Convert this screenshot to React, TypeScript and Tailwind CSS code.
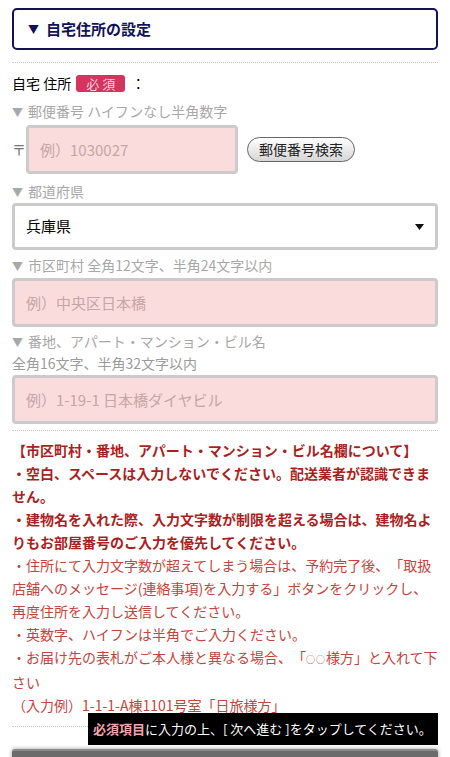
import React from "react";

export default function App() {
  const boldLines = [
    "【市区町村・番地、アパート・マンション・ビル名欄について】",
    "・空白、スペースは入力しないでください。配送業者が認識できま",
    "せん。",
    "・建物名を入れた際、入力文字数が制限を超える場合は、建物名よ",
    "りもお部屋番号のご入力を優先してください。",
  ];
  const normalLines: React.ReactNode[] = [
    "・住所にて入力文字数が超えてしまう場合は、予約完了後、「取扱",
    "店舗へのメッセージ(連絡事項)を入力する」ボタンをクリックし、",
    "再度住所を入力し送信してください。",
    "・英数字、ハイフンは半角でご入力ください。",
    <>
      ・お届け先の表札がご本人様と異なる場合、「<span className="text-[9px] tracking-[1px]">○○</span>様方」と入れて下
    </>,
    "さい",
    "（入力例）1-1-1-A棟1101号室「日旅様方」",
  ];
  return (
    <div className="relative w-[450px] h-[757px] overflow-hidden bg-white px-3 pt-2 font-['Noto_Sans_CJK_JP',sans-serif] text-black [text-spacing-trim:space-all]">
      <div className="h-[42px] border-2 border-[#12125a] rounded-[5px] flex items-center pl-[14px] text-[15px] font-bold text-[#12125a]">
        <span className="text-[11px] mr-[7px]">▼</span>
        <span>自宅住所の設定</span>
      </div>
      <div className="mt-3 border-t border-dotted border-[#c8c8c8]" />
      <div className="mt-[10px] h-[20px] flex items-center text-[14px]">
        <span>自宅 住所</span>
        <span className="ml-[5px] w-[49px] h-[17px] rounded-[3px] bg-[#d4355f] text-[#fbd3de] text-[13px] leading-[17px] text-center tracking-[3px] pl-[3px]">
          必須
        </span>
        <span className="ml-[6px]">：</span>
      </div>
      <div className="mt-2 h-[20px] leading-[20px] text-[14px] text-[#a8a8a8]">
        <span className="text-[11px] mr-[5px]">▼</span>郵便番号 ハイフンなし半角数字
      </div>
      <div className="mt-1 h-[49px] flex items-center">
        <span className="w-[14px] text-[14px] text-[#777]">〒</span>
        <input
          className="w-[212px] h-full border-[3px] border-[#cbcbcb] rounded-[4px] bg-[#fadcdc] px-[11px] text-[15px] outline-none placeholder:text-[#c6a6a6]"
          placeholder="例）1030027"
        />
        <button className="ml-[9px] h-[25px] w-[108px] rounded-full border border-[#666] bg-gradient-to-b from-white to-[#d6d6d6] text-[14px] leading-[23px] text-[#222]">
          郵便番号検索
        </button>
      </div>
      <div className="mt-[7px] h-[20px] leading-[20px] text-[14px] text-[#a8a8a8]">
        <span className="text-[11px] mr-[5px]">▼</span>都道府県
      </div>
      <div className="relative mt-[2px] h-[47px]">
        <select className="w-full h-full appearance-none border-[3px] border-[#cbcbcb] rounded-[4px] bg-white pl-[11px] text-[15px] text-black outline-none">
          <option>兵庫県</option>
        </select>
        <svg className="pointer-events-none absolute right-[14px] top-[21px]" width="9" height="6" viewBox="0 0 9 6">
          <path d="M0 0 H9 L4.5 6 Z" fill="#111" />
        </svg>
      </div>
      <div className="mt-[5px] h-[20px] leading-[20px] text-[14px] text-[#a8a8a8]">
        <span className="text-[11px] mr-[5px]">▼</span>市区町村 全角12文字、半角24文字以内
      </div>
      <input
        className="block mt-[3px] w-full h-[49px] border-[3px] border-[#cbcbcb] rounded-[4px] bg-[#fadcdc] px-[11px] text-[15px] outline-none placeholder:text-[#c6a6a6]"
        placeholder="例）中央区日本橋"
      />
      <div className="mt-[4px] h-[20px] leading-[20px] text-[14px] text-[#a8a8a8]">
        <span className="text-[11px] mr-[5px]">▼</span>番地、アパート・マンション・ビル名
      </div>
      <div className="mt-[2px] h-[20px] leading-[20px] text-[14px] text-[#9c9c9c]">全角16文字、半角32文字以内</div>
      <input
        className="block mt-[2px] w-full h-[49px] border-[3px] border-[#cbcbcb] rounded-[4px] bg-[#fadcdc] px-[11px] text-[15px] outline-none placeholder:text-[#c6a6a6]"
        placeholder="例）1-19-1 日本橋ダイヤビル"
      />
      <div className="mt-[6px] border-t border-dotted border-[#c8c8c8]" />
      <div className="pt-[8px] text-[14px] leading-[23px]">
        {boldLines.map((l, i) => (
          <div key={i} className="whitespace-nowrap font-bold text-[#ab1f1f]">{l}</div>
        ))}
        {normalLines.map((l, i) => (
          <div key={i} className="whitespace-nowrap text-[#c4443e]">{l}</div>
        ))}
      </div>
      <div className="mt-[9px] border-t border-dotted border-[#c8c8c8]" />
      <div className="mt-[22px] h-[50px] rounded-t-[3px] bg-[#6b6b6b] border-t-2 border-[#8a8a8a] shadow-[0_0_4px_rgba(0,0,0,0.4)]" />
      <div className="absolute left-[88px] top-[713px] w-[350px] h-[32px] bg-black flex items-center pl-[5px] text-[13px] text-white whitespace-nowrap">
        <span className="font-bold text-[#f2a3ab]">必須項目</span>
        <span>に入力の上、[ 次へ進む ]をタップしてください。</span>
      </div>
    </div>
  );
}
